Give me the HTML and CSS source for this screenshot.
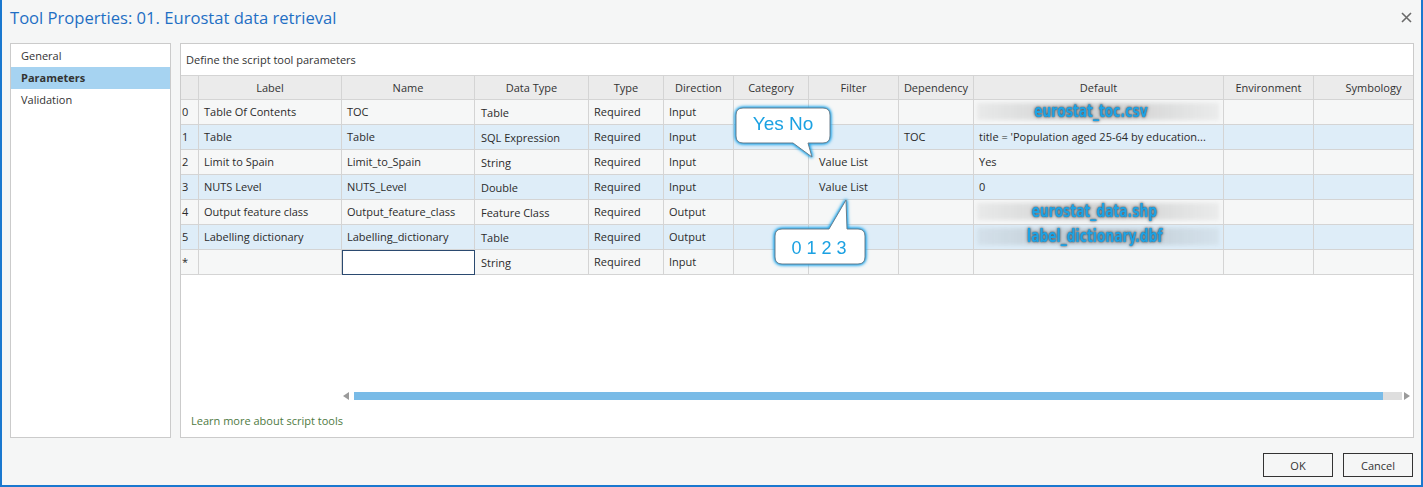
FILE: index.html
```html
<!DOCTYPE html>
<html lang="en">
<head>
<meta charset="utf-8">
<title>Tool Properties</title>
<link rel="stylesheet" href="styles.css">
</head>
<body>
<div class="window">
  <div class="titlebar">
    <h1 class="title">Tool Properties: 01. Eurostat data retrieval</h1>
    <button class="close" aria-label="Close">
      <svg width="11" height="11" viewBox="0 0 11 11"><path d="M1 1 L10 10 M10 1 L1 10" stroke="#6a6a6a" stroke-width="1.6" fill="none"/></svg>
    </button>
  </div>
  <div class="main">
    <nav class="nav">
      <div class="nav-item">General</div>
      <div class="nav-item active">Parameters</div>
      <div class="nav-item">Validation</div>
    </nav>
    <section class="panel">
      <div class="intro">Define the script tool parameters</div>
      <div class="grid">
        <div class="row head">
          <div class="c idx"></div><div class="c">Label</div><div class="c">Name</div><div class="c">Data Type</div><div class="c">Type</div><div class="c">Direction</div><div class="c">Category</div><div class="c">Filter</div><div class="c">Dependency</div><div class="c">Default</div><div class="c">Environment</div><div class="c">Symbology</div>
        </div>
        <div class="row">
          <div class="c idx">0</div><div class="c">Table Of Contents</div><div class="c">TOC</div><div class="c dt">Table</div><div class="c">Required</div><div class="c">Input</div><div class="c"></div><div class="c"></div><div class="c"></div><div class="c def-file shift"><span class="smudge"></span><span class="fname">eurostat_toc.csv</span></div><div class="c"></div><div class="c"></div>
        </div>
        <div class="row alt">
          <div class="c idx">1</div><div class="c">Table</div><div class="c">Table</div><div class="c dt">SQL Expression</div><div class="c">Required</div><div class="c">Input</div><div class="c"></div><div class="c"></div><div class="c">TOC</div><div class="c">title = 'Population aged 25-64 by education...</div><div class="c"></div><div class="c"></div>
        </div>
        <div class="row">
          <div class="c idx">2</div><div class="c">Limit to Spain</div><div class="c">Limit_to_Spain</div><div class="c dt">String</div><div class="c">Required</div><div class="c">Input</div><div class="c"></div><div class="c filt">Value List</div><div class="c"></div><div class="c">Yes</div><div class="c"></div><div class="c"></div>
        </div>
        <div class="row alt">
          <div class="c idx">3</div><div class="c">NUTS Level</div><div class="c">NUTS_Level</div><div class="c dt">Double</div><div class="c">Required</div><div class="c">Input</div><div class="c"></div><div class="c filt">Value List</div><div class="c"></div><div class="c">0</div><div class="c"></div><div class="c"></div>
        </div>
        <div class="row">
          <div class="c idx">4</div><div class="c">Output feature class</div><div class="c">Output_feature_class</div><div class="c dt">Feature Class</div><div class="c">Required</div><div class="c">Output</div><div class="c"></div><div class="c"></div><div class="c"></div><div class="c def-file"><span class="smudge"></span><span class="fname">eurostat_data.shp</span></div><div class="c"></div><div class="c"></div>
        </div>
        <div class="row alt">
          <div class="c idx">5</div><div class="c">Labelling dictionary</div><div class="c">Labelling_dictionary</div><div class="c dt">Table</div><div class="c">Required</div><div class="c">Output</div><div class="c"></div><div class="c"></div><div class="c"></div><div class="c def-file"><span class="smudge"></span><span class="fname">label_dictionary.dbf</span></div><div class="c"></div><div class="c"></div>
        </div>
        <div class="row">
          <div class="c idx">*</div><div class="c"></div><div class="c edit"></div><div class="c dt">String</div><div class="c">Required</div><div class="c">Input</div><div class="c"></div><div class="c"></div><div class="c"></div><div class="c"></div><div class="c"></div><div class="c"></div>
        </div>
      </div>
      <div class="filler"></div>
      <div class="hscroll">
        <span class="arrow arrow-left"></span>
        <div class="track"><div class="thumb"></div></div>
        <span class="arrow arrow-right"></span>
      </div>
      <div class="learn"><a class="learn-link" href="#">Learn more about script tools</a></div>

      <svg class="callout callout-yes" width="110" height="62" viewBox="0 0 110 62">
        <path class="bubble" d="M15 6 H95 Q102 6 102 13 V34 Q102 41 95 41 H80 L84 55 L65 41 H15 Q8 41 8 34 V13 Q8 6 15 6 Z"/>
        <text class="bubble-text" x="55" y="28" text-anchor="middle">Yes No</text>
      </svg>
      <svg class="callout callout-num" width="104" height="76" viewBox="0 0 104 76">
        <path class="bubble" d="M14 35 H61 L78 6 L79 35 H90 Q97 35 97 42 V63 Q97 70 90 70 H14 Q7 70 7 63 V42 Q7 35 14 35 Z"/>
        <text class="bubble-text num" x="51" y="59.5" text-anchor="middle">0 1 2 3</text>
      </svg>
    </section>
  </div>
  <div class="footer">
    <button class="btn">OK</button>
    <button class="btn">Cancel</button>
  </div>
</div>
</body>
</html>
```

FILE: styles.css
```css
* { box-sizing: border-box; }

html, body { margin: 0; padding: 0; }

body {
  width: 1423px;
  height: 487px;
  overflow: hidden;
  font-family: "Open Sans", "Noto Sans", "DejaVu Sans", sans-serif;
  font-size: 11px;
  color: #2b2b2b;
  background: #f5f6f6;
}

.window {
  height: 487px;
  display: flex;
  flex-direction: column;
  background: #f5f6f6;
  border: 2px solid #1a78cf;
  border-top: 0;
}

/* title bar */
.titlebar {
  height: 43px;
  flex: none;
  display: flex;
  justify-content: space-between;
  align-items: flex-start;
  padding-left: 8px;
}

.title {
  margin: 0;
  padding-top: 7px;
  font-size: 16.6px;
  line-height: 22px;
  font-weight: 400;
  color: #1f6fc4;
}

.close {
  margin: 12px 9px 0 0;
  padding: 0;
  width: 11px;
  height: 11px;
  border: 0;
  background: none;
  display: flex;
}

/* main */
.main {
  height: 395px;
  flex: none;
  display: flex;
  gap: 9px;
  padding: 0 7px 0 8px;
}

.nav {
  width: 161px;
  flex: none;
  background: #fff;
  border: 1px solid #cbcbcb;
  padding-top: 1px;
}

.nav-item {
  height: 22px;
  line-height: 22px;
  padding-left: 10px;
  color: #333;
}

.nav-item.active {
  background: #a6d3f1;
  font-weight: 700;
}

.panel {
  flex: 1;
  min-width: 0;
  position: relative;
  background: #fff;
  border: 1px solid #cbcbcb;
  display: flex;
  flex-direction: column;
}

.intro {
  height: 31px;
  line-height: 31px;
  padding-left: 5px;
  color: #333;
  flex: none;
}

/* grid */
.grid {
  border-top: 1px solid #d4d4d4;
  overflow: hidden;
  flex: none;
}

.row {
  display: grid;
  grid-template-columns: 18px 143px 133px 114px 75px 70px 75px 90px 75px 250px 90px 120px;
  height: 25px;
  background: #f6f7f7;
}

.row.alt { background: #deedf8; }

.row.head {
  height: 24px;
  background: #ebebeb;
}

.c {
  border-right: 1px solid #d4d4d4;
  border-bottom: 1px solid #d4d4d4;
  padding-left: 5px;
  line-height: 24px;
  white-space: nowrap;
  overflow: hidden;
  color: #2b2b2b;
}

.row.head .c {
  text-align: center;
  padding-left: 0;
  line-height: 23px;
  color: #333;
}

.c.idx { padding-left: 1px; }
.c.dt { padding-left: 6px; line-height: 26px; }
.c.filt { padding-left: 10px; }

.c.edit {
  background: #fff;
  border: 1px solid #2b4a70;
}

.def-file {
  position: relative;
  text-align: center;
  padding-left: 0;
  padding-right: 8px;
}

.def-file.shift { padding-right: 16px; }

.smudge {
  position: absolute;
  left: 3px;
  right: 4px;
  top: 3px;
  bottom: 4px;
  background: linear-gradient(90deg, rgba(150,150,150,0.14), rgba(110,110,110,0.26) 40%, rgba(110,110,110,0.26) 60%, rgba(150,150,150,0.12));
  filter: blur(2px);
}

.fname {
  position: relative;
  display: inline-block;
  font-family: "Liberation Sans Narrow", "DejaVu Sans Condensed", "Liberation Sans", sans-serif;
  font-weight: 700;
  font-size: 17px;
  line-height: 22px;
  color: #1ea3e4;
  transform: scaleX(0.8);
  text-shadow: 0 0 2px #3a4a5a, 0 0 4px #666;
}

.filler { flex: 1; }

/* scrollbar */
.hscroll {
  height: 8px;
  flex: none;
  display: flex;
  align-items: center;
  margin: 0 3px 0 162px;
}

.arrow {
  width: 0;
  height: 0;
  border-top: 4px solid transparent;
  border-bottom: 4px solid transparent;
  flex: none;
}

.arrow-left { border-right: 6px solid #9a9a9a; margin-right: 5px; }
.arrow-right { border-left: 6px solid #9a9a9a; margin-left: 2px; }

.track {
  flex: 1;
  height: 8px;
  background: #dedede;
  display: flex;
}

.thumb {
  width: 1029px;
  background: #79bbe7;
}

.learn {
  height: 37px;
  flex: none;
  display: flex;
  align-items: center;
  padding: 3px 0 0 10px;
}

.learn-link {
  color: #4f7a3f;
  text-decoration: none;
}

/* callouts */
.callout {
  position: absolute;
  overflow: visible;
  filter: drop-shadow(0 0 1.5px #14a2ea) drop-shadow(0 0 1.5px #14a2ea);
}

.callout-yes { left: 547px; top: 58px; }
.callout-num { left: 587px; top: 150px; }

.bubble {
  fill: #fff;
  stroke: #6d7f8c;
  stroke-width: 1;
}

.bubble-text {
  font-family: "Liberation Sans", Arial, sans-serif;
  font-size: 19px;
  fill: #1ba1e2;
}

.bubble-text.num { font-size: 18px; }

/* footer */
.footer {
  flex: 1;
  display: flex;
  justify-content: flex-end;
  align-items: flex-start;
  gap: 10px;
  padding: 15px 8px 0 0;
}

.btn {
  width: 70px;
  height: 24px;
  border: 1px solid #333;
  background: transparent;
  font-family: "Open Sans", "Noto Sans", sans-serif;
  font-size: 11px;
  color: #333;
  padding: 0;
}
```
